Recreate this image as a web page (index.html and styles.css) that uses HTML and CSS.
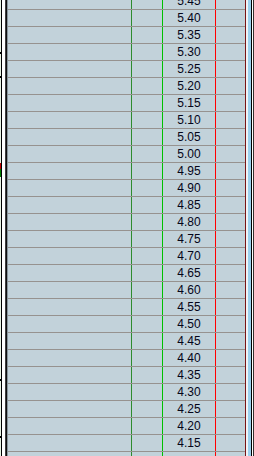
FILE: index.html
```html
<!DOCTYPE html>
<html>
<head>
<meta charset="utf-8">
<link rel="stylesheet" href="styles.css">
</head>
<body>
<div class="frame">
  <div class="left-edge">
    <div class="edge-a"><div class="tick tick-1"></div><div class="tick tick-2"></div><div class="mark"><span class="mark-r"></span><span class="mark-g"></span></div><div class="tick tick-3"></div><div class="tick tick-4"></div></div>
    <div class="edge-b"></div>
    <div class="edge-c"></div>
    <div class="edge-d"></div>
    <div class="edge-e"></div>
  </div>
  <div class="grid" id="grid"></div>
  <div class="right-edge">
    <div class="r1"></div>
    <div class="r2"></div>
    <div class="r3"></div>
    <div class="r4"></div>
    <div class="r5"></div>
    <div class="r6"></div>
  </div>
</div>
<script>
  var g = document.getElementById('grid');
  var html = '';
  for (var v = 545; v >= 415; v -= 5) {
    html += '<div class="row"><div class="c1"></div><div class="c2"></div><div class="c3">' + (v / 100).toFixed(2) + '</div><div class="c4"></div></div>';
  }
  html += '<div class="row row-empty"><div class="c1"></div><div class="c2"></div><div class="c3"></div><div class="c4"></div></div>';
  g.innerHTML = html;
</script>
</body>
</html>
```
FILE: styles.css
```css
html, body {
  margin: 0;
  padding: 0;
  width: 254px;
  height: 456px;
  overflow: hidden;
  background: #ffffff;
}
.frame {
  display: flex;
  height: 456px;
  overflow: hidden;
}
.left-edge {
  display: flex;
  width: 8px;
  flex: none;
  height: 456px;
}
.edge-a {
  width: 1px;
  background: #eaf5e6;
  display: flex;
  flex-direction: column;
}
.tick {
  width: 2px;
  height: 2px;
  background: #000;
}
.tick-1 { margin-top: 52px; }
.tick-2 { margin-top: 22px; }
.mark { margin-top: 85px; display: flex; flex-direction: column; }
.mark-r { width: 2px; height: 6px; background: #c00000; display: block; }
.mark-g { width: 2px; height: 8px; background: #008000; display: block; }
.tick-3 { margin-top: 202px; }
.tick-4 { margin-top: 55px; }
.edge-b { width: 1px; background: #000000; }
.edge-c { width: 3px; background: #ffffff; }
.edge-d { width: 1px; background: #404040; }
.edge-e { width: 2px; background: linear-gradient(90deg, #101010 0 50%, #8a969c 50% 100%); }
.grid {
  width: 237px;
  flex: none;
  display: flex;
  flex-direction: column;
  margin-top: -7px;
  background: #c2d2da;
}
.row {
  display: flex;
  height: 16px;
  flex: none;
  border-bottom: 1px solid #96928f;
}
.c1 { width: 123px; border-right: 1px solid #2e8b2e; flex: none; }
.c2 { width: 30px; border-right: 1px solid #00c000; flex: none; }
.c3 {
  width: 52px;
  border-right: 1px solid #ff0000;
  flex: none;
  font-family: "Liberation Sans", Arial, sans-serif;
  font-size: 12px;
  line-height: 16px;
  color: #050518;
  text-align: center;
}
.c4 { width: 29px; flex: none; }
.right-edge {
  display: flex;
  flex: none;
  width: 9px;
  height: 456px;
}
.r1 { width: 1px; background: #7a1414; }
.r2 { width: 2px; background: #eef3f6; }
.r3 { width: 3px; background: #9cd0ee; }
.r4 { width: 1px; background: #000000; }
.r5 { width: 1px; background: #ffffff; }
.r6 { width: 1px; background: #303030; }
```
